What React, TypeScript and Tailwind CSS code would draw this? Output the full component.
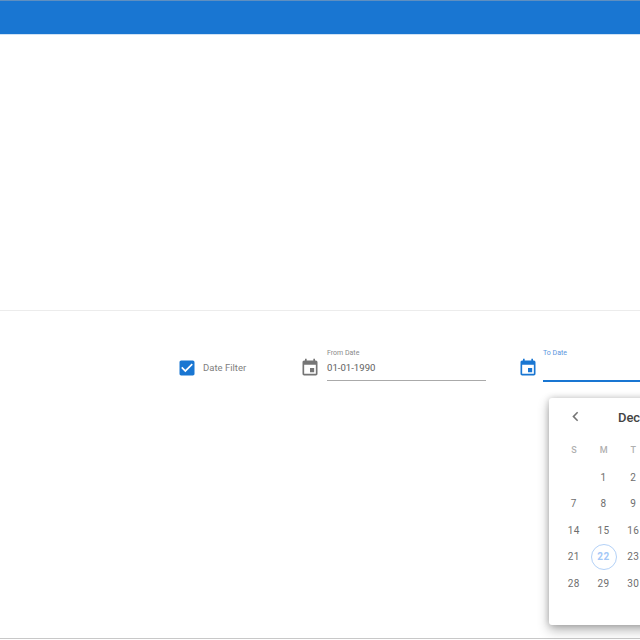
const EventIcon = ({ className }: { className: string }) => (
  <svg className={className} fill="currentColor" viewBox="0 0 24 24">
    <path d="M17 12h-5v5h5v-5zM16 1v2H8V1H6v2H5c-1.11 0-1.99.9-1.99 2L3 19c0 1.1.89 2 2 2h14c1.1 0 2-.9 2-2V5c0-1.1-.9-2-2-2h-1V1h-2zm3 18H5V8h14v11z" />
  </svg>
)

const weekDays = ["S", "M", "T", "W", "T", "F", "S"]

const weeks = [
  [null, 1, 2, 3, 4, 5, 6],
  [7, 8, 9, 10, 11, 12, 13],
  [14, 15, 16, 17, 18, 19, 20],
  [21, 22, 23, 24, 25, 26, 27],
  [28, 29, 30, 31, null, null, null],
]

export default function App() {
  return (
    <div className="relative w-[640px] h-[640px] overflow-hidden bg-white font-['Roboto',sans-serif]">
      {/* App bar */}
      <div className="h-[35px] bg-[#1976d2] border-t border-[#5f8fc0] border-b border-b-[#cfe2f5]"></div>

      {/* Empty chart area */}
      <div className="h-[276px] border-b border-[#ececec]"></div>

      {/* Filter row */}
      <div className="flex h-[328px] pl-[177px] pt-[38px] border-b border-[#c8c8c8]">
        <div className="flex items-start shrink-0 w-[68px]">
          <svg className="w-5 h-5 shrink-0 mt-[9px] text-[#1976d2]" fill="currentColor" viewBox="0 0 24 24">
            <path d="M19 3H5c-1.11 0-2 .9-2 2v14c0 1.1.89 2 2 2h14c1.11 0 2-.9 2-2V5c0-1.11-.89-2-2-2zm-9 14l-5-5 1.41-1.41L10 14.17l7.59-7.59L19 8l-9 9z" />
          </svg>
          <span className="ml-[6px] mt-[12px] whitespace-nowrap text-[9.5px] leading-[14px] text-[#808080]">Date Filter</span>
        </div>

        <EventIcon className="w-5 h-5 shrink-0 ml-[55px] mt-[9px] text-[#757575]" />
        <div className="ml-[7px] w-[159px] shrink-0 h-[32px] border-b border-[#aaaaaa]">
          <div className="text-[7px] leading-[9px] text-[#8a8a8a]">From Date</div>
          <div className="mt-[3px] text-[9.6px] leading-[14px] text-[#616161]">01-01-1990</div>
        </div>

        <EventIcon className="w-5 h-5 shrink-0 ml-[32px] mt-[9px] text-[#1976d2]" />
        <div className="ml-[5px] w-[160px] shrink-0 h-[33px] border-b-2 border-[#1976d2]">
          <div className="text-[7px] leading-[9px] text-[#5b95de]">To Date</div>
        </div>
      </div>

      {/* Date picker popover */}
      <div className="absolute left-[549px] top-[398px] w-[228px] h-[227px] rounded-[3px] bg-white shadow-[0_5px_12px_rgba(0,0,0,0.3),0_0_6px_rgba(0,0,0,0.18)]">
        <div className="flex items-center justify-between h-[37px] pl-[17px] pr-[15px]">
          <svg className="w-[19px] h-[19px] text-[#757575]" fill="currentColor" viewBox="0 0 24 24">
            <path d="M15.41 7.41L14 6l-6 6 6 6 1.41-1.41L10.83 12z" />
          </svg>
          <span className="pt-[2px] text-[13px] font-medium text-[#444444]">December 2014</span>
          <svg className="w-[19px] h-[19px] text-[#757575]" fill="currentColor" viewBox="0 0 24 24">
            <path d="M10 6L8.59 7.41 13.17 12l-4.58 4.59L10 18l6-6z" />
          </svg>
        </div>

        <div className="grid grid-cols-7 px-[10px] mt-[3px] h-[26px] items-center">
          {weekDays.map((day, i) => (
            <span key={i} className="text-center text-[9px] font-medium text-[#b0b0b0]">{day}</span>
          ))}
        </div>

        {weeks.map((week, w) => (
          <div key={w} className="grid grid-cols-7 px-[10px] h-[26.5px] items-center">
            {week.map((day, i) => (
              <div key={i} className="flex justify-center">
                {day === 22 ? (
                  <span className="flex items-center justify-center w-[26px] h-[26px] rounded-full border border-[#b3d1f7] text-[10px] font-bold tracking-[0.5px] text-[#a3c8f7]">
                    {day}
                  </span>
                ) : (
                  <span className="text-[10px] tracking-[0.5px] text-[#6e6e6e]">{day}</span>
                )}
              </div>
            ))}
          </div>
        ))}
      </div>
    </div>
  )
}
